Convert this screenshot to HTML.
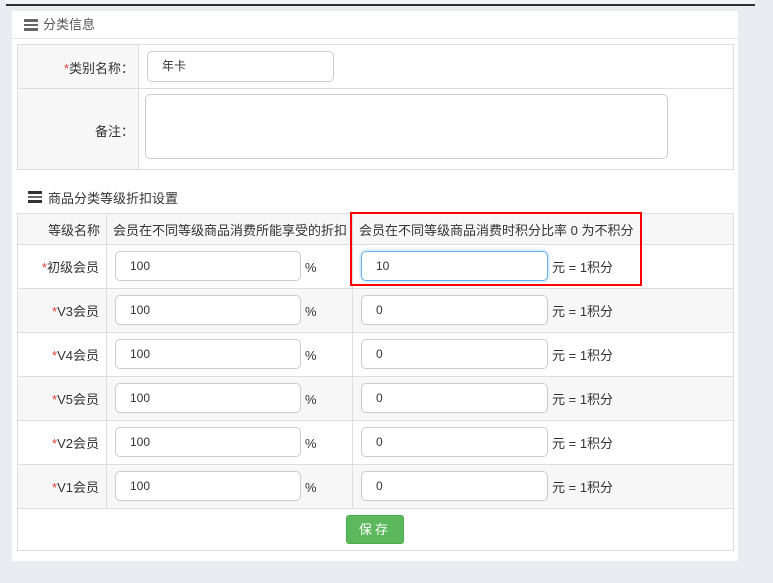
<!DOCTYPE html>
<html><head><meta charset="utf-8"><style>
*{box-sizing:border-box;margin:0;padding:0}
body{width:773px;height:583px;background:#e9edf2;font-family:"Liberation Sans","Noto Sans CJK SC",sans-serif;font-size:13px;color:#333;position:relative;overflow:hidden}
.top{position:absolute;left:6px;top:0;width:749px;height:6px;background:#2b3036}
.topin{position:absolute;left:6px;top:0;width:749px;height:4px;background:#f4f4f4}
.panel{position:absolute;left:12px;top:11px;width:726px;height:550px;background:#fff}
.hd{position:absolute;left:0;top:0;width:726px;height:28px;border-bottom:1px solid #e5e5e5;color:#555;font-size:13px;line-height:27px;padding-left:31px}
.ico{position:absolute;width:14px;height:12px;border-top:3px solid #666;border-bottom:3px solid #666}
.ico:after{content:"";position:absolute;left:0;right:0;top:2px;height:2px;background:#666}
.ab{position:absolute}
.cell{position:absolute;border:1px solid #ddd}
.inp{position:absolute;border:1px solid #ccc;border-radius:5px;background:#fff;padding-left:14px;line-height:28px;height:30px;font-size:12px}
.red{color:#e4393c}
</style></head><body>
<div class="top"></div><div class="topin"></div>
<div class="panel">
<div class="hd"><span class="ico" style="left:12px;top:8px"></span>分类信息</div>
</div>
<div class="cell" style="left:17px;top:44px;width:717px;height:126px;background:#fff"></div>
<div class="ab" style="left:17px;top:44px;width:122px;height:126px;background:#f7f7f7;border:1px solid #ddd"></div>
<div class="ab" style="left:17px;top:88px;width:717px;height:1px;background:#ddd"></div>
<div class="ab" style="left:17px;top:58px;width:117px;text-align:right;font-size:13px"><span class="red">*</span>类别名称：</div>
<div class="ab" style="left:17px;top:121px;width:117px;text-align:right;font-size:13px">备注：</div>
<div class="inp" style="left:147px;top:51px;width:187px;height:31px">年卡</div>
<div class="inp" style="left:145px;top:94px;width:523px;height:65px"></div>
<div class="ico" style="left:28px;top:191px;border-color:#333"></div>
<div class="ab" style="left:48px;top:188px;font-size:13px">商品分类等级折扣设置</div>
<div class="cell" style="left:17px;top:213px;width:717px;height:338px"></div>
<div class="ab" style="left:18px;top:214px;width:715px;height:30px;background:#f7f7f7"></div>
<div class="ab" style="left:18px;top:244px;width:715px;height:44px;background:#fff"></div>
<div class="ab" style="left:18px;top:288px;width:715px;height:44px;background:#f7f7f7"></div>
<div class="ab" style="left:18px;top:332px;width:715px;height:44px;background:#fff"></div>
<div class="ab" style="left:18px;top:376px;width:715px;height:44px;background:#f7f7f7"></div>
<div class="ab" style="left:18px;top:420px;width:715px;height:44px;background:#fff"></div>
<div class="ab" style="left:18px;top:464px;width:715px;height:44px;background:#f7f7f7"></div>
<div class="ab" style="left:17px;top:244px;width:717px;height:1px;background:#ddd"></div>
<div class="ab" style="left:17px;top:288px;width:717px;height:1px;background:#ddd"></div>
<div class="ab" style="left:17px;top:332px;width:717px;height:1px;background:#ddd"></div>
<div class="ab" style="left:17px;top:376px;width:717px;height:1px;background:#ddd"></div>
<div class="ab" style="left:17px;top:420px;width:717px;height:1px;background:#ddd"></div>
<div class="ab" style="left:17px;top:464px;width:717px;height:1px;background:#ddd"></div>
<div class="ab" style="left:17px;top:508px;width:717px;height:1px;background:#ddd"></div>
<div class="ab" style="left:106px;top:213px;width:1px;height:295px;background:#ddd"></div>
<div class="ab" style="left:352px;top:213px;width:1px;height:295px;background:#ddd"></div>
<div class="ab" style="left:17px;top:220px;width:83px;text-align:right">等级名称</div>
<div class="ab" style="left:113px;top:220px">会员在不同等级商品消费所能享受的折扣</div>
<div class="ab" style="left:359px;top:220px">会员在不同等级商品消费时积分比率 0 为不积分</div>
<div class="ab" style="left:350px;top:212px;width:292px;height:74px;border:2px solid #f00"></div>

<div class="ab" style="left:17px;top:257px;width:82px;text-align:right"><span class="red">*</span>初级会员</div>
<div class="ab" style="left:17px;top:301px;width:82px;text-align:right"><span class="red">*</span>V3会员</div>
<div class="ab" style="left:17px;top:345px;width:82px;text-align:right"><span class="red">*</span>V4会员</div>
<div class="ab" style="left:17px;top:389px;width:82px;text-align:right"><span class="red">*</span>V5会员</div>
<div class="ab" style="left:17px;top:433px;width:82px;text-align:right"><span class="red">*</span>V2会员</div>
<div class="ab" style="left:17px;top:477px;width:82px;text-align:right"><span class="red">*</span>V1会员</div>

<div class="inp" style="left:115px;top:251px;width:186px">100</div>
<div class="inp" style="left:115px;top:295px;width:186px">100</div>
<div class="inp" style="left:115px;top:339px;width:186px">100</div>
<div class="inp" style="left:115px;top:383px;width:186px">100</div>
<div class="inp" style="left:115px;top:427px;width:186px">100</div>
<div class="inp" style="left:115px;top:471px;width:186px">100</div>
<div class="ab" style="left:305px;top:260px">%</div>
<div class="ab" style="left:305px;top:304px">%</div>
<div class="ab" style="left:305px;top:348px">%</div>
<div class="ab" style="left:305px;top:392px">%</div>
<div class="ab" style="left:305px;top:436px">%</div>
<div class="ab" style="left:305px;top:480px">%</div>

<div class="inp" style="left:361px;top:251px;width:187px;border-color:#66afe9;box-shadow:0 0 4px rgba(102,175,233,.6)">10</div>
<div class="inp" style="left:361px;top:295px;width:187px">0</div>
<div class="inp" style="left:361px;top:339px;width:187px">0</div>
<div class="inp" style="left:361px;top:383px;width:187px">0</div>
<div class="inp" style="left:361px;top:427px;width:187px">0</div>
<div class="inp" style="left:361px;top:471px;width:187px">0</div>
<div class="ab" style="left:552px;top:257px">元 = 1积分</div>
<div class="ab" style="left:552px;top:301px">元 = 1积分</div>
<div class="ab" style="left:552px;top:345px">元 = 1积分</div>
<div class="ab" style="left:552px;top:389px">元 = 1积分</div>
<div class="ab" style="left:552px;top:433px">元 = 1积分</div>
<div class="ab" style="left:552px;top:477px">元 = 1积分</div>

<div class="ab" style="left:346px;top:515px;width:58px;height:29px;background:#5cb85c;border:1px solid #4cae4c;border-radius:3px;color:#fff;font-size:13px;text-align:center;line-height:27px;letter-spacing:3px">保存</div>
</body></html>
